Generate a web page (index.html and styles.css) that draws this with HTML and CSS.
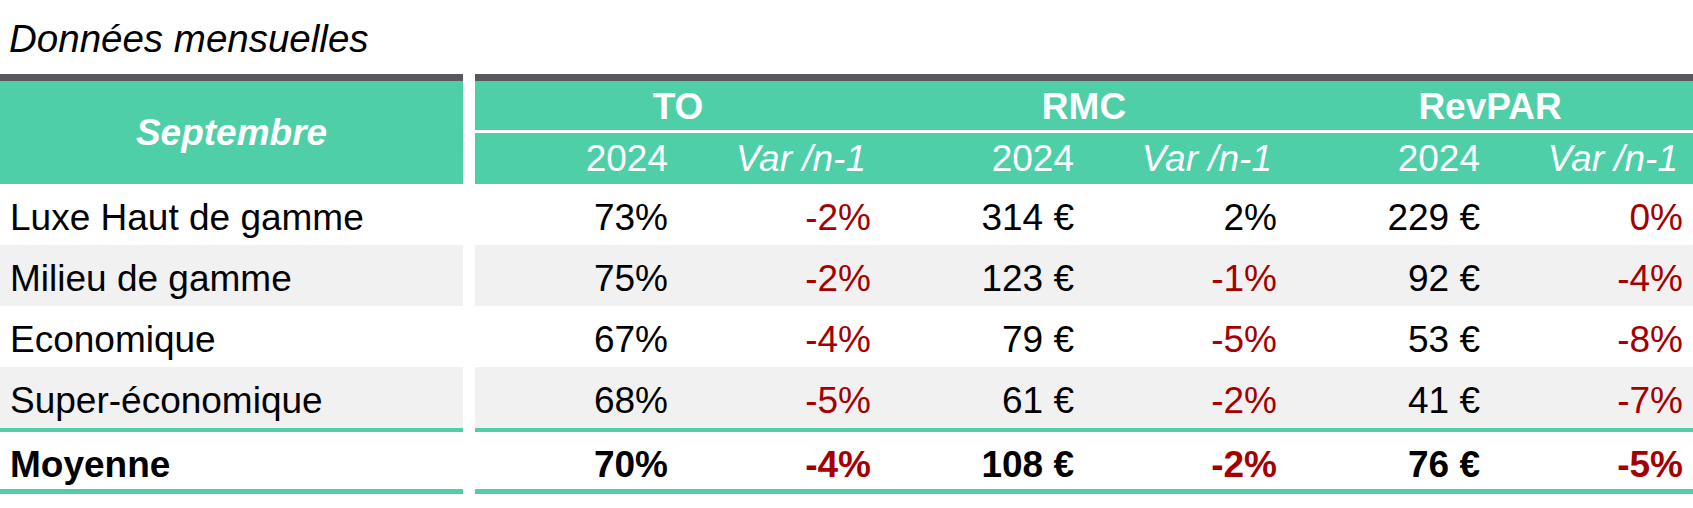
FILE: index.html
```html
<!DOCTYPE html>
<html lang="fr">
<head>
<meta charset="utf-8">
<title>Données mensuelles</title>
<link rel="stylesheet" href="styles.css">
</head>
<body>
<div class="title">Données mensuelles</div>
<div class="table">
  <div class="head">
    <div class="head-label">Septembre</div>
    <div class="head-groups">
      <div class="groups">
        <div class="group">TO</div>
        <div class="group">RMC</div>
        <div class="group">RevPAR</div>
      </div>
      <div class="subs">
        <div class="sub">2024</div><div class="sub var">Var /n-1</div>
        <div class="sub">2024</div><div class="sub var">Var /n-1</div>
        <div class="sub">2024</div><div class="sub var">Var /n-1</div>
      </div>
    </div>
  </div>

  <div class="row">
    <div class="label">Luxe Haut de gamme</div>
    <div class="vals">
      <div class="v">73%</div><div class="v neg">-2%</div>
      <div class="v">314 €</div><div class="v">2%</div>
      <div class="v">229 €</div><div class="v neg">0%</div>
    </div>
  </div>
  <div class="row alt">
    <div class="label">Milieu de gamme</div>
    <div class="vals">
      <div class="v">75%</div><div class="v neg">-2%</div>
      <div class="v">123 €</div><div class="v neg">-1%</div>
      <div class="v">92 €</div><div class="v neg">-4%</div>
    </div>
  </div>
  <div class="row">
    <div class="label">Economique</div>
    <div class="vals">
      <div class="v">67%</div><div class="v neg">-4%</div>
      <div class="v">79 €</div><div class="v neg">-5%</div>
      <div class="v">53 €</div><div class="v neg">-8%</div>
    </div>
  </div>
  <div class="row alt last">
    <div class="label">Super-économique</div>
    <div class="vals">
      <div class="v">68%</div><div class="v neg">-5%</div>
      <div class="v">61 €</div><div class="v neg">-2%</div>
      <div class="v">41 €</div><div class="v neg">-7%</div>
    </div>
  </div>
  <div class="row total">
    <div class="label">Moyenne</div>
    <div class="vals">
      <div class="v">70%</div><div class="v neg">-4%</div>
      <div class="v">108 €</div><div class="v neg">-2%</div>
      <div class="v">76 €</div><div class="v neg">-5%</div>
    </div>
  </div>
</div>
</body>
</html>
```
FILE: styles.css
```css
* { box-sizing: border-box; }

body {
  margin: 0;
  background: #ffffff;
  color: #000000;
  font-family: "Liberation Sans", Arial, sans-serif;
  font-size: 37px;
}

.title {
  height: 74px;
  padding: 20px 0 0 9px;
  font-size: 38.5px;
  line-height: 38.5px;
  font-style: italic;
}

.table {
  width: 1693px;
}

.head {
  display: flex;
  gap: 12px;
}

.head-label {
  width: 463px;
  flex: none;
  height: 110px;
  border-top: 7px solid #58575c;
  background: #4ecfa8;
  color: #ffffff;
  font-weight: bold;
  font-style: italic;
  text-align: center;
  line-height: 103px;
}

.head-groups {
  flex: 1;
  border-top: 7px solid #58575c;
  display: flex;
  flex-direction: column;
  gap: 3px;
}

.groups {
  display: grid;
  grid-template-columns: repeat(3, 1fr);
  height: 49px;
  background: #4ecfa8;
  color: #ffffff;
  font-weight: bold;
  padding-top: 2px;
  line-height: 47px;
}

.group {
  text-align: center;
}

.subs {
  display: grid;
  grid-template-columns: repeat(6, 1fr);
  height: 51px;
  background: #4ecfa8;
  color: #ffffff;
  padding-top: 1px;
  line-height: 49px;
}

.sub {
  text-align: right;
  padding-right: 10px;
}

.sub.var {
  font-style: italic;
  padding-right: 15px;
}

.row {
  display: flex;
  gap: 12px;
  height: 61px;
}

.row .label,
.row .vals {
  padding-top: 7px;
  line-height: 54px;
}

.label {
  width: 463px;
  flex: none;
  padding-left: 10px;
}

.vals {
  flex: 1;
  display: grid;
  grid-template-columns: repeat(6, 1fr);
}

.v {
  text-align: right;
  padding-right: 10px;
}

.neg {
  color: #a50000;
}

.row.alt .label,
.row.alt .vals {
  background: #f1f1f2;
}

.row.last {
  height: 65px;
}

.row.last .label,
.row.last .vals {
  border-bottom: 4px solid #4ecfa8;
}

.row.total {
  height: 62px;
  font-weight: bold;
}

.row.total .label,
.row.total .vals {
  padding-top: 9px;
  line-height: 48px;
  border-bottom: 5px solid #4ecfa8;
}
```
